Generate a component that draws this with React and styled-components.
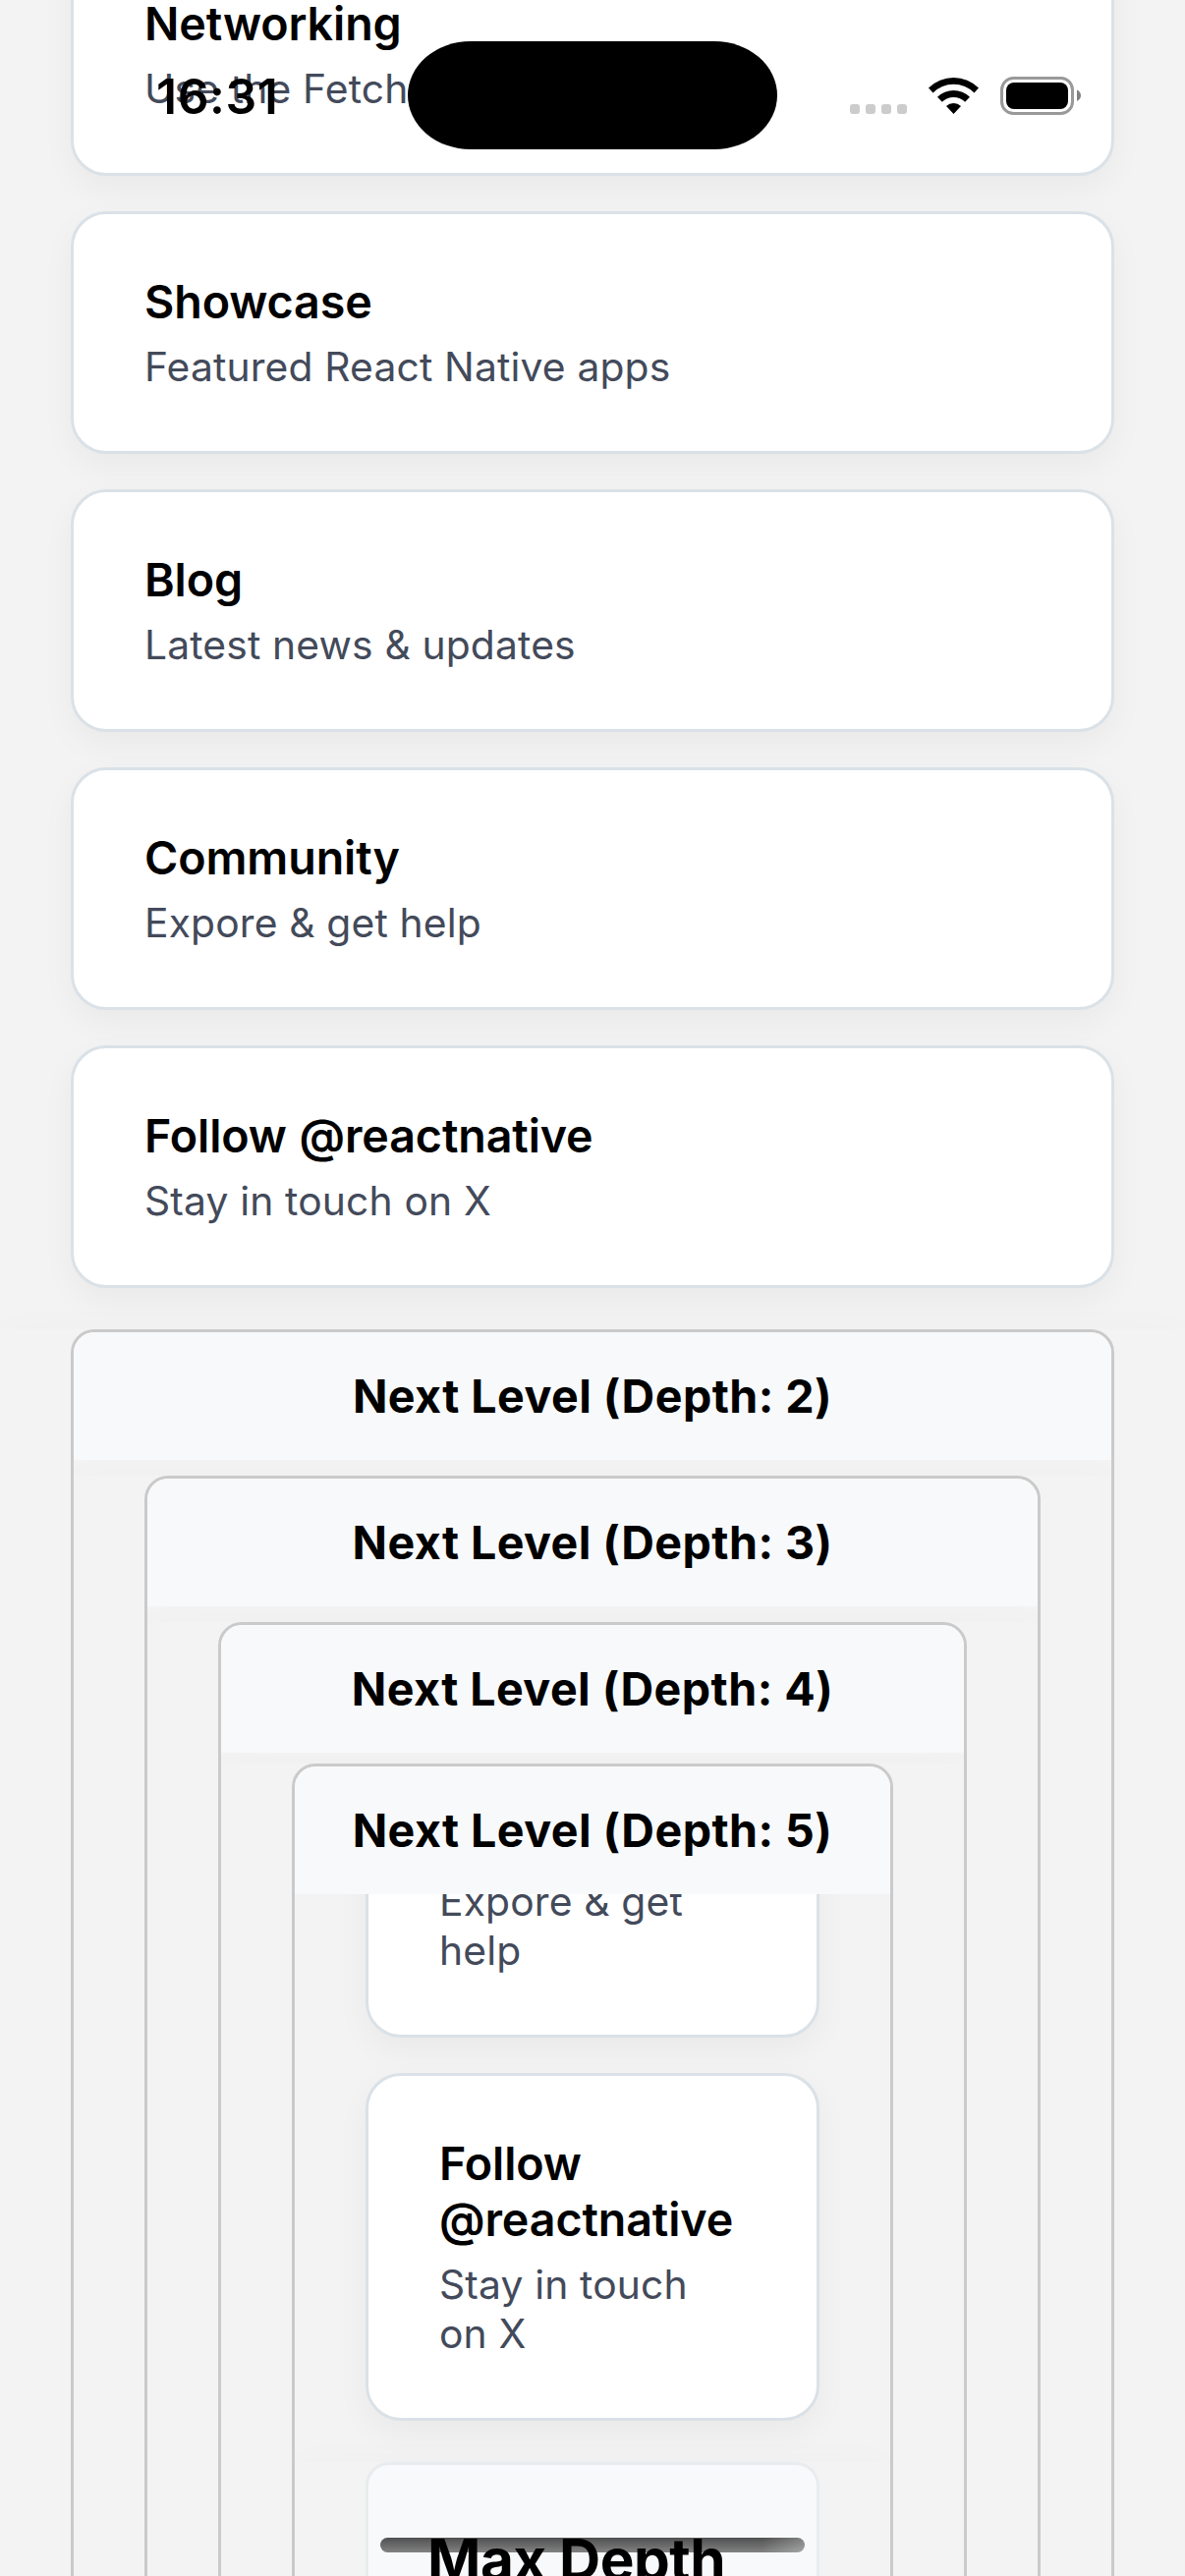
import React from "react";
import styled, { createGlobalStyle } from "styled-components";

const GlobalStyle = createGlobalStyle`
  * { box-sizing: border-box; }
  html, body { margin: 0; padding: 0; background: #f3f3f3; }
  body { font-family: Inter, Roboto, "Liberation Sans", sans-serif; color: #000; }
`;

const Screen = styled.main`
  position: relative;
  width: 1206px;
  height: 2622px;
  overflow: hidden;
  background: #f3f3f3;
`;

const Scroll = styled.div`
  display: flex;
  flex-direction: column;
  gap: 42px;
  margin-top: ${(p) => -p.$offset}px;
`;

const LinkList = styled.div`
  display: flex;
  flex-direction: column;
  gap: 36px;
  padding: 0 72px;
`;

const Card = styled.a`
  display: block;
  padding: 61px 72px;
  border: 3px solid #dae1e7;
  border-radius: 36px;
  background: #fff;
  box-shadow: 0 12px 34px rgba(0, 0, 0, 0.045);
`;

const CardTitle = styled.div`
  font-size: 46.6px;
  font-weight: 600;
  line-height: 57px;
  letter-spacing: -0.1px;
  word-spacing: 1px;
`;

const CardText = styled.div`
  margin-top: 12px;
  font-size: 40.8px;
  line-height: 50px;
  letter-spacing: 0.15px;
  color: #434a5a;
`;

const LevelArea = styled.section`
  padding: 0 72px;
  background: #f3f3f3;
  box-shadow: 0 12px 48px rgba(0, 0, 0, 0.035);
`;

const Frame = styled.div`
  height: 1400px;
  overflow: hidden;
  border: 3px solid #cacaca;
  border-radius: 24px;
`;

const LevelHeader = styled.h2`
  margin: 0;
  padding: 36px 0;
  background: #f8f9fb;
  font-size: 46.6px;
  font-weight: 700;
  line-height: 58px;
  letter-spacing: 0.45px;
  text-align: center;
  white-space: nowrap;
`;

const LevelBody = styled.div`
  height: 1260px;
  overflow: hidden;
  padding-top: ${(p) => p.$top || 0}px;
`;

const MaxDepth = styled.div`
  height: 300px;
  padding: 60px;
  border: 3px solid #e8ecef;
  border-radius: 24px;
  background: #f8f9fb;
  font-size: 58.4px;
  font-weight: 700;
  line-height: 72px;
  letter-spacing: -0.5px;
  white-space: nowrap;
`;

const StatusBar = styled.div`
  position: absolute;
  inset: 0 0 auto 0;
  height: 186px;
`;

const Clock = styled.div`
  position: absolute;
  left: 159px;
  top: 68px;
  font-size: 49.8px;
  font-weight: 600;
  line-height: 60px;
  letter-spacing: 0.6px;
`;

const Island = styled.div`
  position: absolute;
  left: 415px;
  top: 42px;
  width: 376px;
  height: 110px;
  border-radius: 64px / 55px;
  background: #000;
`;

const StatusIcons = styled.svg`
  position: absolute;
  left: 860px;
  top: 70px;
`;

const HomeIndicator = styled.div`
  position: absolute;
  left: 387px;
  top: 2583px;
  width: 432px;
  height: 15px;
  border-radius: 8px;
  background:
    linear-gradient(90deg, transparent 90%, rgba(255, 255, 255, 0.28)),
    linear-gradient(rgba(0, 0, 0, 0.68), rgba(0, 0, 0, 0.48));
`;

function LinkCard({ title, text }) {
  return (
    <Card>
      <CardTitle>{title}</CardTitle>
      <CardText>{text}</CardText>
    </Card>
  );
}

function Level({ depth, gap, children }) {
  return (
    <LevelArea>
      <Frame>
        <LevelHeader>Next Level (Depth: {depth})</LevelHeader>
        <LevelBody $top={gap}>{children}</LevelBody>
      </Frame>
    </LevelArea>
  );
}

export default function App() {
  return (
    <Screen>
      <GlobalStyle />
      <Scroll $offset={68}>
        <LinkList>
          <LinkCard title="Networking" text="Use the Fetch API" />
          <LinkCard title="Showcase" text="Featured React Native apps" />
          <LinkCard title="Blog" text="Latest news & updates" />
          <LinkCard title="Community" text="Expore & get help" />
          <LinkCard title="Follow @reactnative" text={"Stay in touch on\u00a0X"} />
        </LinkList>
        <Level depth={2} gap={16}>
          <Level depth={3} gap={16}>
            <Level depth={4} gap={11}>
              <Level depth={5} gap={0}>
                <Scroll $offset={151}>
                  <LinkList>
                    <LinkCard title="Community" text="Expore & get help" />
                    <LinkCard title="Follow @reactnative" text={"Stay in touch on\u00a0X"} />
                  </LinkList>
                  <LevelArea>
                    <MaxDepth>Max Depth</MaxDepth>
                  </LevelArea>
                </Scroll>
              </Level>
            </Level>
          </Level>
        </Level>
      </Scroll>

      <StatusBar>
        <Clock>16:31</Clock>
        <Island />
        <StatusIcons width="250" height="56" viewBox="860 70 250 56">
          <g fill="#ccc">
            <rect x="865" y="106" width="10" height="10" rx="3" />
            <rect x="881" y="106" width="10" height="10" rx="3" />
            <rect x="897" y="106" width="10" height="10" rx="3" />
            <rect x="913" y="106" width="10" height="10" rx="3" />
          </g>
          <path d="M945 89.5 A36 36 0 0 1 996 89.5 L991.5 94.5 A29.5 29.5 0 0 0 949.5 94.5 Z" />
          <path d="M954 98.7 A23.5 23.5 0 0 1 987 98.7 L982.2 103.7 A16.6 16.6 0 0 0 958.8 103.7 Z" />
          <path d="M963 108 A11 11 0 0 1 978 108 L970.5 116 Z" />
          <rect x="1019.5" y="79.5" width="72" height="36" rx="12" fill="none" stroke="#999" strokeWidth="3" />
          <rect x="1024" y="84" width="63" height="27" rx="8" />
          <path d="M1096 91.5 Q1100 93.5 1100 97.3 Q1100 101 1096 103 Z" fill="#808080" />
        </StatusIcons>
      </StatusBar>
      <HomeIndicator />
    </Screen>
  );
}
